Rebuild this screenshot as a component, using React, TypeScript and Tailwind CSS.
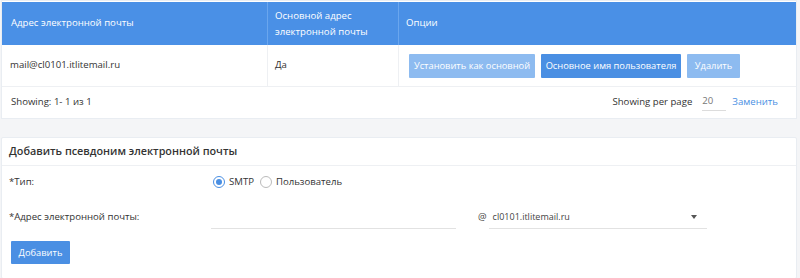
import React from 'react';

const font = { fontFamily: '"Open Sans", "Noto Sans", Arial, sans-serif' };

const EmailTable: React.FC = () => (
  <div className="mx-[1px] bg-white border border-[#e9edf2]">
    <div className="grid grid-cols-[266px_131px_1fr] bg-[#4a90e6] text-white text-[9.6px] h-[43px] mt-[1px]">
      <div className="flex items-center px-[9px] border-r border-[#6aa6ee]">Адрес электронной почты</div>
      <div className="flex items-center px-[7px] leading-[16px] border-r border-[#6aa6ee]">
        Основной адрес электронной почты
      </div>
      <div className="flex items-center px-[7px]">Опции</div>
    </div>
    <div className="grid grid-cols-[266px_131px_1fr] h-[42px] text-[9.6px] text-[#333] border-b border-[#eef0f3]">
      <div className="flex items-center px-[8px] border-r border-[#eef0f3]">mail@cl0101.itlitemail.ru</div>
      <div className="flex items-center px-[7px] border-r border-[#eef0f3]">Да</div>
      <div className="flex items-center gap-[6px] px-[10px] whitespace-nowrap">
        <button className="h-[24px] w-[126px] text-[9.3px] text-white bg-[#8dbbf0] rounded-[1px]">Установить как основной</button>
        <button className="h-[24px] w-[140px] text-[9.3px] text-white bg-[#4a8fe3] rounded-[1px]">Основное имя пользователя</button>
        <button className="h-[24px] w-[53px] text-[9.3px] text-white bg-[#8dbbf0] rounded-[1px]">Удалить</button>
      </div>
    </div>
    <div className="flex items-center justify-between h-[31px] px-[9px] text-[9.6px] text-[#333]">
      <span>Showing: 1- 1 из 1</span>
      <div className="flex items-center pr-[9px]">
        <span>Showing per page</span>
        <span className="ml-[10px] w-[24px] border-b border-[#dcdcdc] text-[#777] pb-[1px]">20</span>
        <span className="ml-[6px] text-[#4a8fe3]">Заменить</span>
      </div>
    </div>
  </div>
);

const AddAliasForm: React.FC = () => (
  <div className="mx-[1px] mt-[18px] bg-white border border-[#e9edf2] rounded-[2px] text-[#333]">
    <div className="h-[28px] flex items-center px-[7px] text-[10.8px] font-semibold border-b border-[#eef0f3]">
      Добавить псевдоним электронной почты
    </div>
    <div className="px-[7px] text-[9.6px]">
      <div className="flex items-center h-[33px]">
        <span className="w-[204px]">*Тип:</span>
        <label className="flex items-center gap-[4px]">
          <span className="w-[12px] h-[12px] rounded-full border border-[#4a8fe3] flex items-center justify-center">
            <span className="w-[6px] h-[6px] rounded-full bg-[#4a8fe3]" />
          </span>
          SMTP
        </label>
        <label className="flex items-center gap-[4px] ml-[6px]">
          <span className="w-[12px] h-[12px] rounded-full border border-[#bbb]" />
          Пользователь
        </label>
      </div>
      <div className="flex items-end h-[30px]">
        <span className="w-[202px] pb-[5px]">*Адрес электронной почты:</span>
        <div className="w-[245px] h-[24px] border-b border-[#e2e2e2]" />
        <span className="ml-[22px] pb-[5px] text-[#444]">@</span>
        <div className="ml-[2px] w-[218px] h-[24px] border-b border-[#e2e2e2] flex items-center justify-between pl-[4px] pr-[10px] text-[9px] text-[#444]">
          <span>cl0101.itlitemail.ru</span>
          <span className="w-0 h-0 border-l-[3px] border-r-[3px] border-t-[4px] border-l-transparent border-r-transparent border-t-[#555]" />
        </div>
      </div>
      <div className="pt-[12px] pb-[14px] pl-[2px]">
        <button className="h-[23px] w-[59px] text-[9.3px] text-white bg-[#4a8fe3] rounded-[1px]">Добавить</button>
      </div>
    </div>
  </div>
);

export default function App() {
  return (
    <div className="w-[800px] h-[278px] overflow-hidden bg-[#f4f5f7] pr-[2px]" style={font}>
      <EmailTable />
      <AddAliasForm />
    </div>
  );
}
